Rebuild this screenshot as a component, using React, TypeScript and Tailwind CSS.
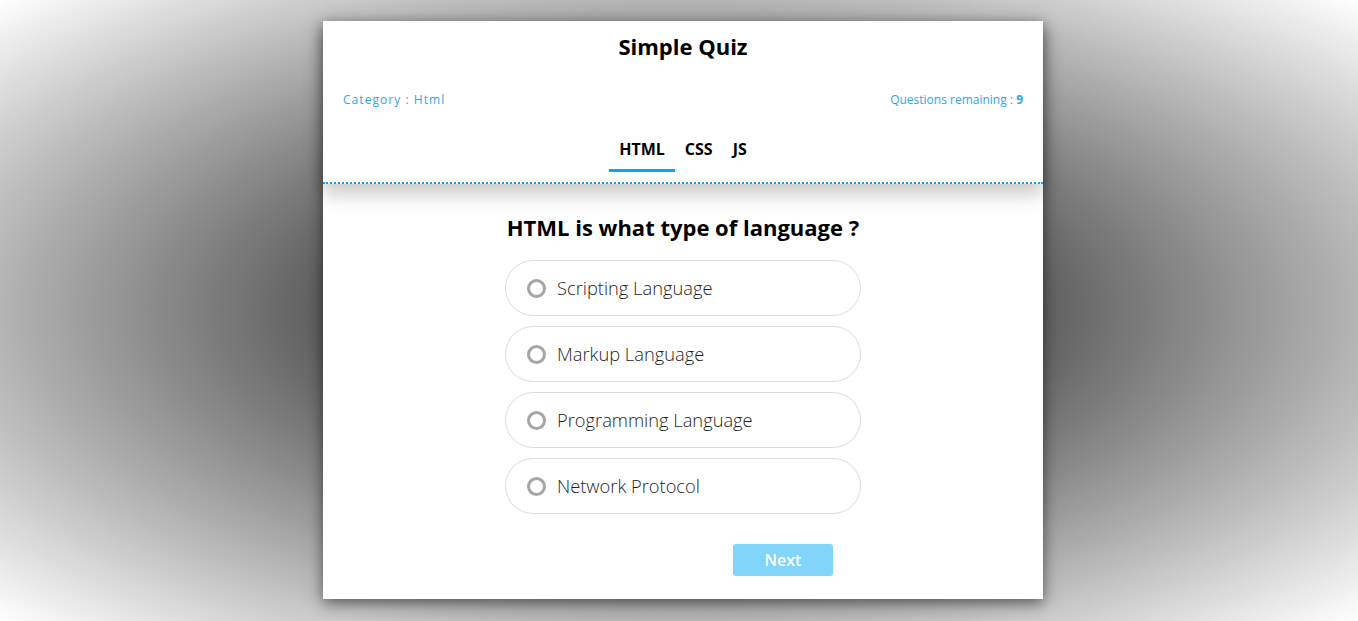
const options = [
    "Scripting Language",
    "Markup Language",
    "Programming Language",
    "Network Protocol",
];

const tabs = ["HTML", "CSS", "JS"];

const App = () => {
    return (
        <div className="min-h-screen w-full bg-[radial-gradient(ellipse_at_center,#000000_0%,#ffffff_100%)] flex justify-center pl-[8px] pt-[21px] font-['Open_Sans',sans-serif]">
            <div className="w-[720px] h-[578px] bg-white shadow-[0_4px_14px_rgba(0,0,0,0.55)] flex flex-col">
                <div className="relative z-10 bg-white border-b-2 border-dotted border-[#03a9f4] shadow-[0_10px_18px_rgba(0,0,0,0.22)]">
                    <h1 className="text-center text-[22px] font-bold text-black leading-none pt-[14px]">
                        Simple Quiz
                    </h1>
                    <div className="flex justify-between items-center px-5 mt-[37px] text-[12px] text-[#2ea6ec] leading-none">
                        <span className="tracking-[1.05px]">Category : Html</span>
                        <span>
                            Questions remaining : <b className="font-bold">9</b>
                        </span>
                    </div>
                    <div className="flex justify-center mt-[33px]">
                        {tabs.map((t, i) => (
                            <div
                                key={t}
                                className={`px-[10px] pb-[10px] text-[16px] font-bold leading-[20px] text-black ${
                                    i === 0 ? "border-b-[3px] border-[#03a9f4]" : "border-b-[3px] border-transparent"
                                }`}
                            >
                                {t}
                            </div>
                        ))}
                    </div>
                    <div className="h-[10px]" />
                </div>
                <div className="flex flex-col items-center pt-[32px]">
                    <h2 className="text-[22px] font-bold text-black leading-none">
                        HTML is what type of language ?
                    </h2>
                    <div className="flex flex-col gap-[10px] mt-[22px]">
                        {options.map((o) => (
                            <label
                                key={o}
                                className="w-[356px] h-[56px] rounded-full border border-[#dcdcdc] flex items-center pl-[21px] gap-[11px] cursor-pointer"
                            >
                                <span className="w-[19px] h-[19px] rounded-full border-[3px] border-[#a6a6a6]" />
                                <span className="text-[18.3px] font-light text-[#1f1f1f] leading-none">{o}</span>
                            </label>
                        ))}
                    </div>
                    <div className="w-full flex justify-center pl-[200px] mt-[30px]">
                        <button className="w-[100px] h-[32px] rounded-[3px] bg-[#81d4fa] text-white text-[16px] font-semibold">
                            Next
                        </button>
                    </div>
                </div>
            </div>
        </div>
    );
};

export default App;
